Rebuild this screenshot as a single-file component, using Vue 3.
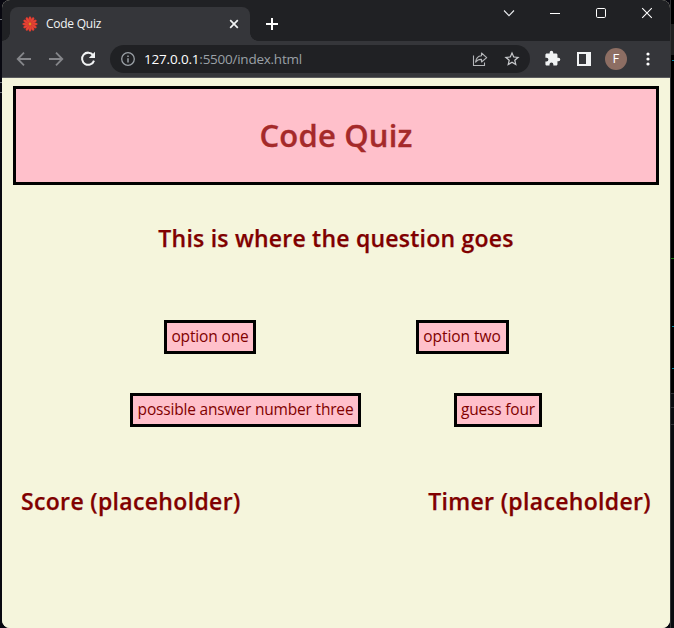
<script setup>
const petals = Array.from({ length: 12 }, (_, i) => i * 30)
const rows = [
  [
    { text: 'option one', name: 'one' },
    { text: 'option two', name: 'two' },
  ],
  [
    { text: 'possible answer number three', name: 'three' },
    { text: 'guess four', name: 'four' },
  ],
]
</script>

<template>
  <div class="desktop">
    <div class="window">
      <div class="tabstrip">
        <div class="tab">
          <svg class="favicon" viewBox="0 0 16 16">
            <circle cx="8" cy="8" r="5" fill="#b9302a" />
            <ellipse v-for="a in petals" :key="a" cx="8" cy="3.7" rx="1.35" ry="3.2" fill="#ea4335" stroke="#b5332c" stroke-width=".35" :transform="`rotate(${a} 8 8)`" />
            <circle cx="8" cy="8" r="1.4" fill="#e8891c" />
          </svg>
          <span class="tab-title">Code Quiz</span>
          <svg class="tab-close" viewBox="0 0 10 10"><path d="M1.2 1.2 8.8 8.8M8.8 1.2 1.2 8.8" fill="none" stroke="#f1f3f4" stroke-width="1.7" /></svg>
        </div>
        <svg class="plus" viewBox="0 0 12 12"><path d="M6 0V12M0 6H12" fill="none" stroke="#fff" stroke-width="2" /></svg>
        <div class="controls">
          <svg viewBox="0 0 12 12"><path d="M1 3.5 6 8.7 11 3.5" fill="none" stroke="#e8eaed" stroke-width="1.1" /></svg>
          <svg viewBox="0 0 12 12"><path d="M1 6.5H11" fill="none" stroke="#fff" /></svg>
          <svg viewBox="0 0 12 12"><rect x="1.5" y="1.5" width="9" height="9" rx="1.2" fill="none" stroke="#fff" /></svg>
          <svg viewBox="0 0 12 12"><path d="M1.2 1.2 10.8 10.8M10.8 1.2 1.2 10.8" fill="none" stroke="#fff" stroke-width="1.1" /></svg>
        </div>
      </div>

      <div class="toolbar">
        <svg class="nav back" viewBox="0 0 16 16"><path d="M15 8H2M8 1.6 1.7 8 8 14.4" fill="none" stroke="#85868a" stroke-width="1.8" /></svg>
        <svg class="nav forward" viewBox="0 0 16 16"><path d="M1 8H14M8 1.6 14.3 8 8 14.4" fill="none" stroke="#85868a" stroke-width="1.8" /></svg>
        <svg class="nav reload" viewBox="0 0 16 16"><path d="M13.1 4.1A6.1 6.1 0 1 0 14 9.6" fill="none" stroke="#f1f3f4" stroke-width="2" /><path d="M15 .8V7H8.8Z" fill="#f1f3f4" /></svg>
        <div class="omnibox">
          <svg class="info" viewBox="0 0 14 14"><circle cx="7" cy="7" r="6.3" fill="none" stroke="#9aa0a6" stroke-width="1.3" /><path d="M7 6.2V10.4M7 3.4V5" fill="none" stroke="#9aa0a6" stroke-width="1.5" /></svg>
          <div class="url"><span class="host">127.0.0.1</span><span class="path">:5500/index.html</span></div>
          <svg class="share" viewBox="0 0 16 16"><path d="M1.5 4.5V14.5H12.5V11.5" fill="none" stroke="#b4b6b9" stroke-width="1.1" /><path d="M9.5 2 14.7 6.6 9.5 11V8.4C6.8 8.3 5.1 9 3.6 11.1 4 7.3 6.1 5.1 9.5 4.8Z" fill="none" stroke="#b4b6b9" stroke-width="1.1" stroke-linejoin="round" /></svg>
          <svg class="star" viewBox="1.5 1.5 21 21"><path d="M22 9.24l-7.19-.62L12 2 9.19 8.63 2 9.24l5.46 4.73L5.82 21 12 17.27 18.18 21l-1.63-7.03L22 9.24zM12 15.4l-3.76 2.27 1-4.28-3.32-2.88 4.38-.38L12 6.1l1.71 4.04 4.38.38-3.32 2.88 1 4.28L12 15.4z" fill="#c8cacd" /></svg>
        </div>
        <svg class="puzzle" viewBox="0 0 24 24"><path d="M20.5 11H19V7c0-1.1-.9-2-2-2h-4V3.5a2.5 2.5 0 0 0-5 0V5H4c-1.1 0-2 .9-2 2v3.8h1.5a2.7 2.7 0 0 1 0 5.4H2V20c0 1.1.9 2 2 2h3.8v-1.5a2.7 2.7 0 0 1 5.4 0V22H17c1.1 0 2-.9 2-2v-4h1.5a2.5 2.5 0 0 0 0-5z" fill="#f1f3f4" /></svg>
        <svg class="panel" viewBox="0 0 14 14"><path d="M0 0H14V14H0ZM2 2V12H9V2Z" fill="#f1f3f4" fill-rule="evenodd" /></svg>
        <div class="avatar">F</div>
        <svg class="menu" viewBox="0 0 4 14"><circle cx="2" cy="2" r="1.6" fill="#fff" /><circle cx="2" cy="7" r="1.6" fill="#fff" /><circle cx="2" cy="12" r="1.6" fill="#fff" /></svg>
      </div>

      <main class="page">
        <header><h1>Code Quiz</h1></header>
        <h2 class="question"><span>This is where the question goes</span></h2>
        <div v-for="(row, i) in rows" :key="i" class="answers" :class="'row-' + (i + 1)">
          <button v-for="o in row" :key="o.name" :class="o.name">{{ o.text }}</button>
        </div>
        <footer>
          <h2 class="score">Score (placeholder)</h2>
          <h2 class="timer">Timer (placeholder)</h2>
        </footer>
      </main>
    </div>
    <div class="backdrop-edge"></div>
  </div>
</template>

<style>
body { background: #080810; }
</style>

<style scoped>
* { box-sizing: border-box; }
svg { display: block; flex: none; overflow: visible; }
.desktop {
  display: flex;
  height: 628px;
  padding-left: 2px;
  overflow: hidden;
  background:
    linear-gradient(#70747a, #70747a) 0 19px / 2px 1px no-repeat,
    linear-gradient(#70747a, #70747a) 0 82px / 2px 1px no-repeat,
    linear-gradient(#70747a, #70747a) 0 92px / 2px 1px no-repeat,
    #080810;
}
.window {
  display: flex;
  flex-direction: column;
  width: 668px;
  overflow: hidden;
  border-radius: 8px;
  background: #f5f5dc;
}
.backdrop-edge {
  width: 4px;
  border-left: 1px solid #333335;
  background:
    linear-gradient(#0787a0, #0787a0) 1px 60px / 2px 1px no-repeat,
    linear-gradient(#1c7a13, #1c7a13) 0 258px / 3px 1px no-repeat,
    linear-gradient(#0787a0, #0787a0) 1px 326px / 2px 1px no-repeat,
    linear-gradient(#0787a0, #0787a0) 1px 368px / 2px 1px no-repeat,
    linear-gradient(#303035, #303035) 0 393px / 3px 1px no-repeat,
    linear-gradient(#303035, #303035) 0 407px / 3px 1px no-repeat,
    linear-gradient(#303035, #303035) 0 424px / 3px 1px no-repeat,
    linear-gradient(#202020, #202020) 0 24px / 3px 31px no-repeat,
    linear-gradient(#000 393px, #090b0f 393px);
}
.tabstrip {
  display: flex;
  flex: none;
  height: 41px;
  padding: 7px 17px 0 8px;
  background: #202124;
}
.tab {
  position: relative;
  display: flex;
  align-items: center;
  width: 240px;
  height: 34px;
  padding: 0 11px 0 12px;
  border-radius: 8px 8px 0 0;
  background: #35363a;
  font-family: "Open Sans", sans-serif;
}
.tab::before, .tab::after {
  content: "";
  position: absolute;
  bottom: 0;
  width: 8px;
  height: 8px;
}
.tab::before { left: -8px; background: radial-gradient(circle at 0 0, transparent 7.5px, #35363a 8px); }
.tab::after { right: -8px; background: radial-gradient(circle at 100% 0, transparent 7.5px, #35363a 8px); }
.favicon { width: 16px; height: 16px; }
.tab-title { flex: 1; margin: -1px 0 0 8px; color: #f1f3f4; font-size: 12px; letter-spacing: -0.25px; }
.tab-close { width: 10px; height: 10px; }
.plus { width: 12px; height: 12px; margin: 11px 0 0 16px; }
.controls { display: flex; gap: 34px; margin-left: auto; }
.controls svg { width: 12px; height: 12px; }
.toolbar {
  display: flex;
  flex: none;
  align-items: center;
  height: 37px;
  padding: 0 20px 0 14px;
  border-bottom: 1px solid #5a5b5e;
  background: #35363a;
}
.nav { width: 16px; height: 16px; }
.forward, .reload { margin-left: 16px; }
.omnibox {
  display: flex;
  align-items: center;
  width: 420px;
  height: 28px;
  margin-left: 14px;
  padding: 0 10px 0 11px;
  border-radius: 14px;
  background: #202124;
}
.info { width: 14px; height: 14px; }
.url { flex: 1; margin-left: 9px; font: 13.5px/20px "Open Sans", sans-serif; white-space: nowrap; }
.host { color: #fff; letter-spacing: -0.18px; }
.path { color: #9aa0a6; letter-spacing: -0.25px; }
.share { width: 16px; height: 16px; margin-right: 16px; }
.star { width: 16px; height: 16px; }
.puzzle { width: 17px; height: 17px; margin: -1px -1px 0 14px; }
.panel { width: 14px; height: 14px; margin-left: 17px; }
.avatar {
  width: 22px;
  height: 22px;
  margin-left: 14px;
  border-radius: 50%;
  background: #8d6e63;
  color: #fff;
  font: 12px/22px Roboto, sans-serif;
  text-align: center;
}
.menu { width: 4px; height: 14px; margin-left: 19px; }
.page {
  flex: 1;
  padding: 8px 11px 0;
  background: #f5f5dc;
  color: maroon;
  font-family: "Trebuchet MS", "Open Sans", sans-serif;
  white-space: nowrap;
}
header {
  height: 99px;
  border: 3px solid #000;
  background: pink;
  color: brown;
  text-align: center;
}
h1, h2 { margin: 0; font-weight: 600; }
h1 { font-size: 31px; line-height: 93px; letter-spacing: 0.2px; -webkit-text-stroke: 0.3px brown; }
h2 { font-size: 23px; line-height: 32px; -webkit-text-stroke: 0.25px maroon; }
.question { margin-top: 37px; text-align: center; letter-spacing: 0.23px; }
.answers { display: flex; }
.row-1 { gap: 160px; padding-left: 151px; margin-top: 66px; }
.row-2 { gap: 93px; padding-left: 117px; margin-top: 39px; }
button {
  height: 34px;
  padding: 0;
  border: 3px solid #000;
  background: pink;
  color: maroon;
  font: 15.5px/26px "Trebuchet MS", "Open Sans", sans-serif;
  padding-bottom: 2px;
}
.one { width: 92px; letter-spacing: -0.15px; }
.two { width: 93px; padding-right: 1px; letter-spacing: -0.05px; }
.three { width: 231px; letter-spacing: -0.18px; }
.four { width: 88px; letter-spacing: -0.2px; }
footer { display: flex; justify-content: space-between; margin-top: 58px; padding: 0 8px; }
.score, .timer { letter-spacing: 0.34px; }
</style>
